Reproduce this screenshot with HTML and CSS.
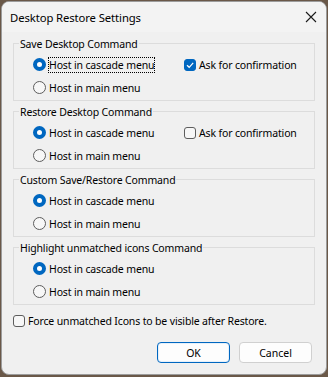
FILE: index.html
```html
<!DOCTYPE html>
<html>
<head>
<meta charset="utf-8">
<link rel="stylesheet" href="styles.css">
</head>
<body>
<div class="window">
  <div class="titlebar">
    <span class="title">Desktop Restore Settings</span>
    <svg class="close" width="12" height="12" viewBox="0 0 12 12"><path d="M1 1 L11 11 M11 1 L1 11" stroke="#1a1a1a" stroke-width="1.1" fill="none"/></svg>
  </div>
  <div class="content">
    <div class="group">
      <div class="legend">Save Desktop Command</div>
      <div class="grid">
        <div class="opt"><span class="radio on"></span><span class="lbl focus">Host in cascade menu</span></div>
        <div class="opt"><span class="check on"><svg width="10" height="10" viewBox="0 0 10 10"><path d="M2 5.2 L4.2 7.3 L8.2 2.8" stroke="#fff" stroke-width="1.2" fill="none"/></svg></span><span class="lbl">Ask for confirmation</span></div>
        <div class="opt"><span class="radio"></span><span class="lbl">Host in main menu</span></div>
      </div>
    </div>
    <div class="group">
      <div class="legend">Restore Desktop Command</div>
      <div class="grid">
        <div class="opt"><span class="radio on"></span><span class="lbl">Host in cascade menu</span></div>
        <div class="opt"><span class="check"></span><span class="lbl">Ask for confirmation</span></div>
        <div class="opt"><span class="radio"></span><span class="lbl">Host in main menu</span></div>
      </div>
    </div>
    <div class="group">
      <div class="legend">Custom Save/Restore Command</div>
      <div class="grid">
        <div class="opt"><span class="radio on"></span><span class="lbl">Host in cascade menu</span></div>
        <div></div>
        <div class="opt"><span class="radio"></span><span class="lbl">Host in main menu</span></div>
      </div>
    </div>
    <div class="group">
      <div class="legend">Highlight unmatched icons Command</div>
      <div class="grid">
        <div class="opt"><span class="radio on"></span><span class="lbl">Host in cascade menu</span></div>
        <div></div>
        <div class="opt"><span class="radio"></span><span class="lbl">Host in main menu</span></div>
      </div>
    </div>
    <div class="force opt"><span class="check"></span><span class="lbl">Force unmatched Icons to be visible after Restore.</span></div>
    <div class="buttons">
      <button class="btn default">OK</button>
      <button class="btn">Cancel</button>
    </div>
  </div>
</div>
</body>
</html>
```
FILE: styles.css
```css
html, body {
  margin: 0;
  padding: 0;
  width: 328px;
  height: 377px;
  overflow: hidden;
  background: #6a5848;
}
body {
  font-family: "Noto Sans", sans-serif;
  font-size: 10.5px;
  letter-spacing: -0.15px;
  color: #000;
}
.window {
  margin: 1px 0 0 1px;
  width: 324px;
  height: 372px;
  border: 1px solid #9c9c9c;
  border-radius: 8px;
  background: #f0f0f0;
  overflow: hidden;
  display: flex;
  flex-direction: column;
}
.titlebar {
  height: 30px;
  flex: none;
  display: flex;
  align-items: center;
  justify-content: space-between;
  padding: 0 9px 0 8px;
  background: #f3f3f3;
}
.title {
  font-size: 11.3px;
  letter-spacing: -0.1px;
}
.close {
  display: block;
}
.content {
  padding: 0 11px;
  display: flex;
  flex-direction: column;
}
.group {
  margin-top: 10px;
  border: 1px solid #dcdcdc;
}
.group:first-child {
  margin-top: 11px;
}
.legend {
  margin: -7px 0 0 5px;
  padding: 0 1px;
  width: fit-content;
  line-height: 14px;
  height: 14px;
  background: #f0f0f0;
  white-space: nowrap;
}
.grid {
  display: grid;
  grid-template-columns: 151px 1fr;
  grid-auto-rows: 23px;
  padding: 2px 0 1px 19px;
}
.opt {
  display: flex;
  align-items: center;
}
.lbl {
  margin-left: 3px;
  line-height: 14px;
  white-space: nowrap;
}
.focus {
  outline: 1px dotted #000;
  outline-offset: 0;
}
.radio {
  box-sizing: border-box;
  width: 13px;
  height: 13px;
  border-radius: 50%;
  border: 1px solid #5d5d5d;
  background: #f7f7f7;
  flex: none;
}
.radio.on {
  border: 4px solid #0067c0;
  background: #fff;
}
.check {
  box-sizing: border-box;
  width: 12px;
  height: 12px;
  border-radius: 3px;
  border: 1px solid #5d5d5d;
  background: #f7f7f7;
  flex: none;
  display: flex;
  align-items: center;
  justify-content: center;
}
.check.on {
  border-color: #0067c0;
  background: #0067c0;
}
.check svg {
  display: block;
}
.force {
  margin-top: 6px;
  height: 20px;
}
.buttons {
  display: flex;
  justify-content: flex-end;
  gap: 9px;
  margin-top: 11px;
  padding-right: 3px;
}
.btn {
  box-sizing: border-box;
  width: 73px;
  height: 21px;
  border: 1px solid #d0d0d0;
  border-radius: 4px;
  background: #fdfdfd;
  font-family: "Noto Sans", sans-serif;
  font-size: 10.5px;
  color: #000;
  padding: 0;
}
.btn.default {
  border: 1px solid #0067c0;
  box-shadow: inset 0 0 0 1px #e6f0fa;
}
```
